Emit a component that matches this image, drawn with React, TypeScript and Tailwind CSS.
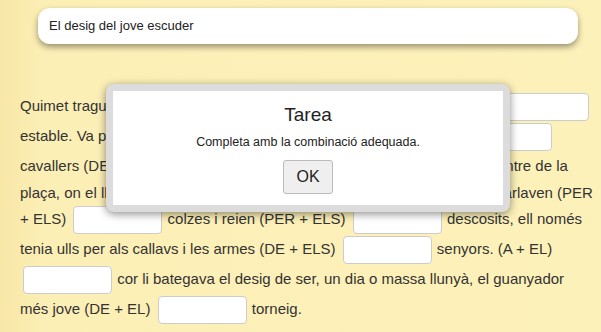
import React from 'react'

function Blank() {
  return (
    <span className="inline-block align-middle w-[89px] h-[28px] my-[1px] ml-[3px] mr-[1px] bg-white border border-[#cccccc] rounded-[4px]" />
  )
}

export default function App() {
  return (
    <div
      className="relative w-[601px] h-[332px] overflow-hidden bg-[#fcefb6] bg-[linear-gradient(90deg,#f8e7a6_0px,#fcefb6_45px,#fdf1ba_100%)] text-[#333333]"
      style={{ fontFamily: '"Liberation Sans", Arial, sans-serif' }}
    >
      <div className="pt-[8px]">
        <div className="ml-[38px] w-[540px] h-[36px] bg-white rounded-[12px] shadow-[0_3px_6px_rgba(0,0,0,0.4)] flex items-center pl-[11px] text-[13px] text-[#222222]">
          El desig del jove escuder
        </div>
      </div>

      <p className="mt-[48px] px-[20px] text-[15px] leading-[22.5px] whitespace-nowrap">
        Quimet tragué el cavall del seu avi de dins la cort fosca i vella (DE + L') <Blank />
        <br />
        estable. Va passejar-lo davant de tota la gentada i als (DE + ELS) <Blank />
        <br />
        cavallers (DE + ELS) <Blank /> que es reunien cada nit al mig del centre de la
        <br />
        plaça, on el llum groguenc de les torxes queia damunt la gent i tots ells parlaven (PER
        <br />
        + ELS) <Blank /> colzes i reien (PER + ELS) <Blank /> descosits, ell només
        <br />
        tenia ulls per als callavs i les armes (DE + ELS) <Blank /> senyors. (A + EL)
        <br />
        <Blank /> cor li bategava el desig de ser, un dia o massa llunyà, el guanyador
        <br />
        més jove (DE + EL) <Blank /> torneig.
      </p>

      <div className="absolute left-[106px] top-[84px] w-[404px] h-[128px] bg-[#dcdcdc] rounded-[8px] p-[7px] shadow-[0_2px_8px_rgba(0,0,0,0.45)]">
        <div className="h-full bg-white flex flex-col items-center pt-[12px]">
          <div className="text-[19px] leading-[24px] text-[#222222]">Tarea</div>
          <div className="mt-[8px] text-[12.5px] leading-[14px] text-[#222222]">Completa amb la combinació adequada.</div>
          <button className="mt-[11px] w-[50px] h-[34px] bg-[#efefef] border border-[#bbbbbb] rounded-[3px] text-[16px] text-[#222222]">
            OK
          </button>
        </div>
      </div>
    </div>
  )
}
